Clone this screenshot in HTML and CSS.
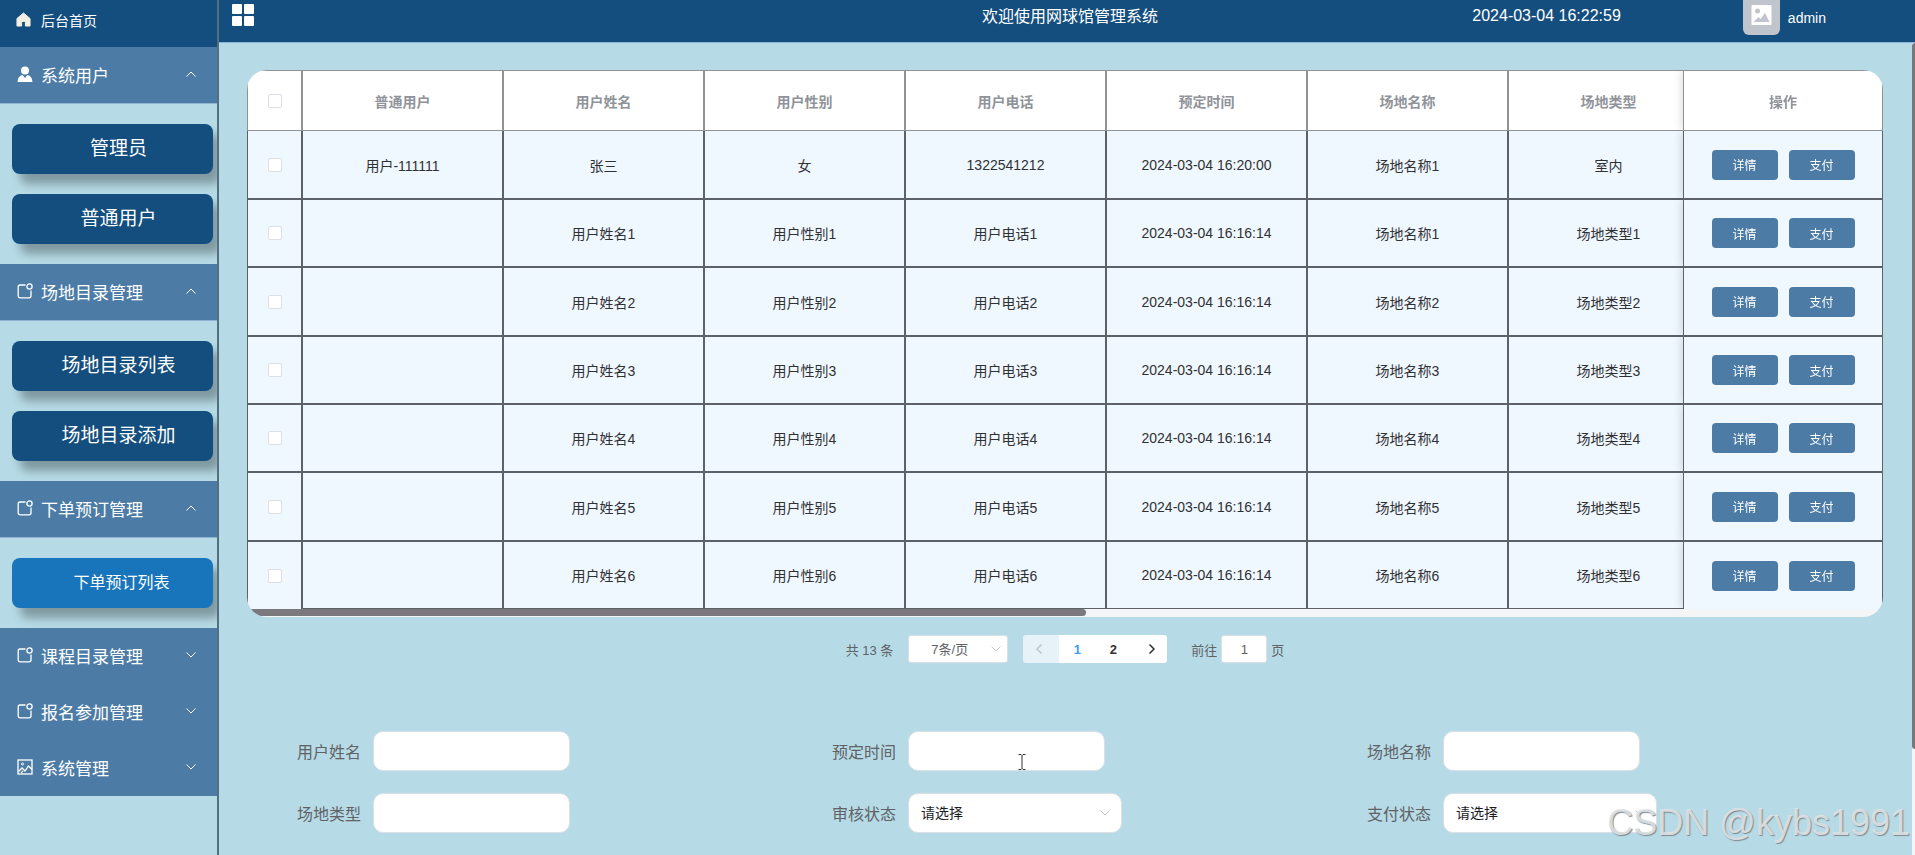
FILE: index.html
```html
<!DOCTYPE html>
<html lang="zh-CN">
<head>
    <meta charset="UTF-8">
    <meta name="viewport" content="width=device-width, initial-scale=1.0">
    <title>网球馆管理系统</title>
    <link rel="stylesheet" href="styles.css">
</head>
<body>
    <!-- shared icons -->
    <svg class="sprite" aria-hidden="true">
        <symbol id="icon-up" viewBox="0 0 12 12"><path d="M1.5 8.5L6 4l4.500 4.500" fill="none" stroke="currentColor"/></symbol>
        <symbol id="icon-down" viewBox="0 0 12 12"><path d="M1.500 3.500L6 8l4.500-4.500" fill="none" stroke="currentColor"/></symbol>
        <symbol id="icon-menu" viewBox="0 0 16 16"><path d="M8.500 2H3Q1.200 2 1.200 3.800V13Q1.200 14.800 3 14.800H12Q14 14.800 14 13V7.500" fill="none" stroke="currentColor" stroke-width="1.300"/><circle cx="12.500" cy="3.500" r="2.600" fill="none" stroke="currentColor" stroke-width="1.300"/></symbol>
    </svg>
    <div class="layout">
        <nav class="sidebar">
            <a class="home" href="#">
                <svg class="icon" viewBox="0 0 16 16"><path d="M8 1L1 7v8h5v-5h4v5h5V7z" fill="#f3efe2" stroke="#f3efe2" stroke-linejoin="round"/></svg>
                <span>后台首页</span>
            </a>
            <button class="menu-title">
                <svg class="icon" viewBox="0 0 16 16"><circle cx="8" cy="4.500" r="4" fill="#fff"/><path d="M0.500 16Q1 9.500 5.500 9L8 12l2.500-3Q15 9.500 15.500 16z" fill="#fff"/></svg>
                <span>系统用户</span>
                <svg class="arrow"><use href="#icon-up"/></svg>
            </button>
            <div class="submenu">
                <a href="#">管理员</a>
                <a href="#">普通用户</a>
            </div>
            <button class="menu-title">
                <svg class="icon"><use href="#icon-menu"/></svg>
                <span>场地目录管理</span>
                <svg class="arrow"><use href="#icon-up"/></svg>
            </button>
            <div class="submenu">
                <a href="#">场地目录列表</a>
                <a href="#">场地目录添加</a>
            </div>
            <button class="menu-title">
                <svg class="icon"><use href="#icon-menu"/></svg>
                <span>下单预订管理</span>
                <svg class="arrow"><use href="#icon-up"/></svg>
            </button>
            <div class="submenu">
                <a class="active" href="#">下单预订列表</a>
            </div>
            <button class="menu-title">
                <svg class="icon"><use href="#icon-menu"/></svg>
                <span>课程目录管理</span>
                <svg class="arrow"><use href="#icon-down"/></svg>
            </button>
            <button class="menu-title">
                <svg class="icon"><use href="#icon-menu"/></svg>
                <span>报名参加管理</span>
                <svg class="arrow"><use href="#icon-down"/></svg>
            </button>
            <button class="menu-title">
                <svg class="icon" viewBox="0 0 16 16" fill="none" stroke="#fff"><rect x="1" y="1" width="14" height="14" stroke-width="1.300"/><circle cx="5.500" cy="5" r="1"/><path d="M1.500 12.500L5 9l3 3 3.500-5L15 10.500M4 14l2-2" stroke-width="1.300"/></svg>
                <span>系统管理</span>
                <svg class="arrow"><use href="#icon-down"/></svg>
            </button>
        </nav>

        <div class="main">
            <header class="topbar">
                <svg class="grid-icon" viewBox="0 0 22 22" fill="#fff"><rect width="10" height="10" rx="1"/><rect x="12" width="10" height="10" rx="1"/><rect y="12" width="10" height="10" rx="1"/><rect x="12" y="12" width="10" height="10" rx="1"/></svg>
                <div class="title">欢迎使用网球馆管理系统</div>
                <div class="topbar-right">
                    <span class="time">2024-03-04 16:22:59</span>
                    <div class="user">
                        <span class="avatar">
                            <svg viewBox="0 0 20 20"><rect width="20" height="20" rx="1" fill="#fff"/><circle cx="6" cy="6" r="2.500" fill="#c0c4cc"/><path d="M2 17l5-5 2 2 4.500-6L18 17z" fill="#c0c4cc"/></svg>
                        </span>
                        <span>admin</span>
                    </div>
                </div>
            </header>

            <main class="content">
                <div class="table-box">
                    <div class="table-scroll">
                        <table>
                            <colgroup>
                                <col class="col-check">
                                <col><col><col><col><col><col><col>
                                <col class="col-action">
                            </colgroup>
                            <thead>
                                <tr>
                                    <th><input type="checkbox" aria-label="全选"></th>
                                    <th>普通用户</th>
                                    <th>用户姓名</th>
                                    <th>用户性别</th>
                                    <th>用户电话</th>
                                    <th>预定时间</th>
                                    <th>场地名称</th>
                                    <th>场地类型</th>
                                    <th class="fixed">操作</th>
                                </tr>
                            </thead>
                            <tbody>
                                <tr>
                                    <td><input type="checkbox" aria-label="选择"></td>
                                    <td>用户-111111</td>
                                    <td>张三</td>
                                    <td>女</td>
                                    <td>1322541212</td>
                                    <td>2024-03-04 16:20:00</td>
                                    <td>场地名称1</td>
                                    <td>室内</td>
                                    <td class="fixed"><button>详情</button><button>支付</button></td>
                                </tr>
                                <tr>
                                    <td><input type="checkbox" aria-label="选择"></td>
                                    <td></td>
                                    <td>用户姓名1</td>
                                    <td>用户性别1</td>
                                    <td>用户电话1</td>
                                    <td>2024-03-04 16:16:14</td>
                                    <td>场地名称1</td>
                                    <td>场地类型1</td>
                                    <td class="fixed"><button>详情</button><button>支付</button></td>
                                </tr>
                                <tr>
                                    <td><input type="checkbox" aria-label="选择"></td>
                                    <td></td>
                                    <td>用户姓名2</td>
                                    <td>用户性别2</td>
                                    <td>用户电话2</td>
                                    <td>2024-03-04 16:16:14</td>
                                    <td>场地名称2</td>
                                    <td>场地类型2</td>
                                    <td class="fixed"><button>详情</button><button>支付</button></td>
                                </tr>
                                <tr>
                                    <td><input type="checkbox" aria-label="选择"></td>
                                    <td></td>
                                    <td>用户姓名3</td>
                                    <td>用户性别3</td>
                                    <td>用户电话3</td>
                                    <td>2024-03-04 16:16:14</td>
                                    <td>场地名称3</td>
                                    <td>场地类型3</td>
                                    <td class="fixed"><button>详情</button><button>支付</button></td>
                                </tr>
                                <tr>
                                    <td><input type="checkbox" aria-label="选择"></td>
                                    <td></td>
                                    <td>用户姓名4</td>
                                    <td>用户性别4</td>
                                    <td>用户电话4</td>
                                    <td>2024-03-04 16:16:14</td>
                                    <td>场地名称4</td>
                                    <td>场地类型4</td>
                                    <td class="fixed"><button>详情</button><button>支付</button></td>
                                </tr>
                                <tr>
                                    <td><input type="checkbox" aria-label="选择"></td>
                                    <td></td>
                                    <td>用户姓名5</td>
                                    <td>用户性别5</td>
                                    <td>用户电话5</td>
                                    <td>2024-03-04 16:16:14</td>
                                    <td>场地名称5</td>
                                    <td>场地类型5</td>
                                    <td class="fixed"><button>详情</button><button>支付</button></td>
                                </tr>
                                <tr>
                                    <td><input type="checkbox" aria-label="选择"></td>
                                    <td></td>
                                    <td>用户姓名6</td>
                                    <td>用户性别6</td>
                                    <td>用户电话6</td>
                                    <td>2024-03-04 16:16:14</td>
                                    <td>场地名称6</td>
                                    <td>场地类型6</td>
                                    <td class="fixed"><button>详情</button><button>支付</button></td>
                                </tr>
                            </tbody>
                        </table>
                    </div>
                    <div class="scroll-track"><div class="scroll-thumb"></div></div>
                </div>

                <div class="pagination">
                    <span>共 13 条</span>
                    <span class="select-wrap page-size">
                        <select aria-label="每页条数"><option>7条/页</option></select>
                        <svg class="caret"><use href="#icon-down"/></svg>
                    </span>
                    <div class="pager">
                        <button class="prev" disabled aria-label="上一页"><svg viewBox="0 0 12 12"><path d="M8.500 1.500L4 6l4.500 4.500" fill="none" stroke="currentColor" stroke-width="1.500"/></svg></button>
                        <button class="current">1</button>
                        <button>2</button>
                        <button class="next" aria-label="下一页"><svg viewBox="0 0 12 12"><path d="M3.500 1.500L8 6l-4.500 4.500" fill="none" stroke="currentColor" stroke-width="1.500"/></svg></button>
                    </div>
                    <label class="jump">前往 <input type="text" value="1"> 页</label>
                </div>

                <form class="search">
                    <div class="field">
                        <label for="name">用户姓名</label>
                        <input type="text" id="name">
                    </div>
                    <div class="field">
                        <label for="time">预定时间</label>
                        <span class="input-wrap">
                            <input type="text" id="time">
                            <svg class="cursor" viewBox="0 0 8 16"><path d="M0.500 0.500h2.500l1 1 1-1h2.500M4 1.500v13M0.500 15.500h2.500l1-1 1 1h2.500" fill="none" stroke="#333"/></svg>
                        </span>
                    </div>
                    <div class="field">
                        <label for="place">场地名称</label>
                        <input type="text" id="place">
                    </div>
                    <div class="field">
                        <label for="type">场地类型</label>
                        <input type="text" id="type">
                    </div>
                    <div class="field">
                        <label for="audit">审核状态</label>
                        <span class="select-wrap">
                            <select id="audit"><option>请选择</option></select>
                            <svg class="caret"><use href="#icon-down"/></svg>
                        </span>
                    </div>
                    <div class="field">
                        <label for="pay">支付状态</label>
                        <span class="select-wrap">
                            <select id="pay"><option>请选择</option></select>
                            <svg class="caret"><use href="#icon-down"/></svg>
                        </span>
                    </div>
                </form>
                <div class="page-scroll"><div class="page-thumb"></div></div>
            </main>
        </div>
    </div>
    <div class="watermark">CSDN @kybs1991</div>
</body>
</html>
```

FILE: styles.css
```css
* {
    box-sizing: border-box;
}
body {
    margin: 0;
    font-family: "Liberation Sans", "Noto Sans CJK SC", sans-serif;
    font-size: 14px;
    color: #303133;
    background-color: #b7dbe6;
    overflow: hidden;
}
button, input, select {
    font-family: inherit;
    margin: 0;
}
a {
    text-decoration: none;
}
.sprite {
    display: none;
}
.layout {
    display: flex;
    height: 100vh;
}

/* sidebar */
.sidebar {
    width: 219px;
    flex-shrink: 0;
    border-right: 2px solid #54707f;
    overflow: hidden;
}
.home {
    display: flex;
    align-items: center;
    gap: 8px;
    height: 47px;
    padding: 0 20px 8px 16px;
    background-color: #144e7e;
    color: #fff;
    font-size: 14px;
}
.icon {
    width: 16px;
    height: 16px;
    flex-shrink: 0;
}
.home .icon {
    width: 15px;
    height: 15px;
    margin-right: 2px;
}
.menu-title {
    display: flex;
    align-items: center;
    gap: 8px;
    width: 100%;
    height: 56px;
    padding: 0 20px 2px 17px;
    border: none;
    background-color: #4c7ca6;
    color: #fff;
    font-size: 17px;
    text-align: left;
    cursor: pointer;
}
.arrow {
    width: 12px;
    height: 12px;
    margin-left: auto;
}
.submenu {
    display: flex;
    flex-direction: column;
    gap: 20px;
    padding: 20px 4px 20px 12px;
    border-top: 1px solid #8fb4cf;
}
.submenu a {
    height: 50px;
    line-height: 50px;
    padding-left: 12px;
    border-radius: 8px;
    background-color: #144e7e;
    box-shadow: 8px 10px 10px rgba(0, 0, 0, 0.3);
    color: #fff;
    font-size: 19px;
    text-align: center;
}
.submenu .active {
    background-color: #1874bb;
    padding-left: 18px;
    font-size: 16px;
}

/* top bar */
.main {
    flex: 1;
    min-width: 0;
    display: flex;
    flex-direction: column;
}
.topbar {
    display: grid;
    grid-template-columns: 1fr auto 1fr;
    height: 43px;
    padding: 0 7px 0 13px;
    line-height: 33px;
    background-color: #144e7e;
    border-bottom: 1px solid #8bb6d6;
    color: #fff;
    font-size: 16px;
}
.grid-icon {
    width: 22px;
    height: 22px;
    margin-top: 4px;
}
.topbar-right {
    display: flex;
    justify-content: flex-end;
    gap: 122px;
    padding-right: 82px;
}
.time {
    line-height: 31px;
}
.user {
    display: flex;
    gap: 8px;
    font-size: 14px;
    line-height: 36px;
}
.avatar {
    width: 37px;
    height: 35px;
    padding: 5px 8px;
    border-radius: 0 0 6px 6px;
    background-color: #c0c4cc;
}
.avatar svg {
    display: block;
    width: 21px;
    height: 20px;
}

/* table */
.content {
    position: relative;
    flex: 1;
    min-height: 0;
    padding-top: 27px;
}
.table-box {
    margin: 0 32px 0 28px;
    border-radius: 20px;
    overflow: hidden;
}
.table-scroll {
    overflow: hidden;
}
table {
    width: calc(100% + 26px);
    table-layout: fixed;
    border-collapse: separate;
    border-spacing: 0;
}
.col-check {
    width: 55px;
}
.col-action {
    width: 200px;
}
th, td {
    padding: 0;
    text-align: center;
    font-size: 14px;
}
th {
    height: 61px;
    background-color: #fff;
    border: 1px solid #909295;
    color: #909399;
    font-weight: bold;
}
td {
    height: 68px;
    background-color: #eff7ff;
    border: 1px solid #5d6168;
}
tbody tr:nth-child(3n) td {
    height: 69px;
}
tbody tr:first-child td {
    border-top-width: 0;
}
tbody tr:last-child td:first-child,
tbody tr:last-child .fixed {
    border-bottom-width: 0;
}
.fixed {
    position: sticky;
    right: 0;
    box-shadow: -2px 0 8px rgba(0, 0, 0, 0.12);
    clip-path: inset(0 0 0 -12px);
}
.fixed button {
    width: 66px;
    height: 30px;
    padding: 0;
    border: none;
    border-radius: 4px;
    background-color: #4c7ca6;
    color: #fff;
    font-size: 12px;
    cursor: pointer;
}
.fixed button + button {
    margin-left: 11px;
}
input[type="checkbox"] {
    appearance: none;
    display: block;
    width: 14px;
    height: 14px;
    margin: 0 auto;
    border: 1px solid #dcdfe6;
    border-radius: 2px;
    background-color: #fff;
}
.scroll-track {
    height: 8px;
    background-color: #f4f5f7;
}
.scroll-thumb {
    width: 51.3%;
    height: 7px;
    border-radius: 0 4px 4px 0;
    background-color: #7b797e;
}

/* pagination */
.pagination {
    display: flex;
    justify-content: center;
    align-items: center;
    margin: 18px 32px 0 28px;
    height: 28px;
    font-size: 13px;
    color: #606266;
}
.select-wrap {
    position: relative;
}
.select-wrap select {
    appearance: none;
    width: 214px;
    height: 40px;
    padding: 0 12px;
    border: 1px solid #dcdfe6;
    border-radius: 10px;
    background-color: #fff;
    color: #1c1d1f;
    font-size: 14px;
}
.caret {
    position: absolute;
    right: 11px;
    top: 14px;
    width: 12px;
    height: 12px;
    color: #c0c4cc;
    pointer-events: none;
}
.page-size {
    margin: 0 15px;
}
.page-size select {
    display: block;
    width: 100px;
    height: 28px;
    padding: 0 22px;
    border-radius: 3px;
    color: #606266;
    font-size: 13px;
}
.page-size .caret {
    right: 6px;
    top: 8px;
}
.pager {
    display: flex;
}
.pager button {
    width: 36px;
    height: 28px;
    padding: 0;
    border: none;
    background-color: #fff;
    color: #303133;
    font-size: 13px;
    font-weight: bold;
}
.pager svg {
    display: block;
    width: 12px;
    height: 12px;
    margin: 0 auto;
}
.pager .prev {
    padding-right: 4px;
    border-radius: 3px 0 0 3px;
    background-color: #e6f2f8;
    color: #c0c4cc;
}
.pager .current {
    color: #409eff;
}
.pager .next {
    padding-left: 6px;
    border-radius: 0 3px 3px 0;
}
.jump {
    display: flex;
    align-items: center;
    gap: 4px;
    margin-left: 24px;
}
.jump input {
    width: 46px;
    height: 28px;
    padding: 0;
    border: 1px solid #dcdfe6;
    border-radius: 3px;
    background-color: #fff;
    color: #606266;
    font-size: 13px;
    text-align: center;
}

/* search form */
.search {
    display: grid;
    grid-template-columns: repeat(3, 1fr);
    row-gap: 22px;
    margin: 68px 13px 0 78px;
}
.field {
    display: flex;
    align-items: center;
    gap: 12px;
    height: 40px;
}
.field label {
    font-size: 16px;
    color: #606266;
}
.field input {
    width: 197px;
    height: 40px;
    padding: 0 12px;
    border: 1px solid #dcdfe6;
    border-radius: 10px;
    background-color: #fff;
}
.input-wrap {
    position: relative;
}
.cursor {
    position: absolute;
    left: 110px;
    top: 23px;
    width: 8px;
    height: 16px;
}

/* page scrollbar */
.page-scroll {
    position: absolute;
    top: 0;
    right: 0;
    bottom: 0;
    width: 3px;
    background-color: #f4f5f7;
}
.page-thumb {
    height: 87%;
    border-radius: 3px 0 0 3px;
    background-color: #77777c;
}
.watermark {
    position: absolute;
    right: 5px;
    bottom: 12px;
    font-size: 36px;
    line-height: 40px;
    color: rgba(225, 228, 231, 0.9);
    text-shadow: 1px 1px 1px #7f8a90;
    pointer-events: none;
}
```
